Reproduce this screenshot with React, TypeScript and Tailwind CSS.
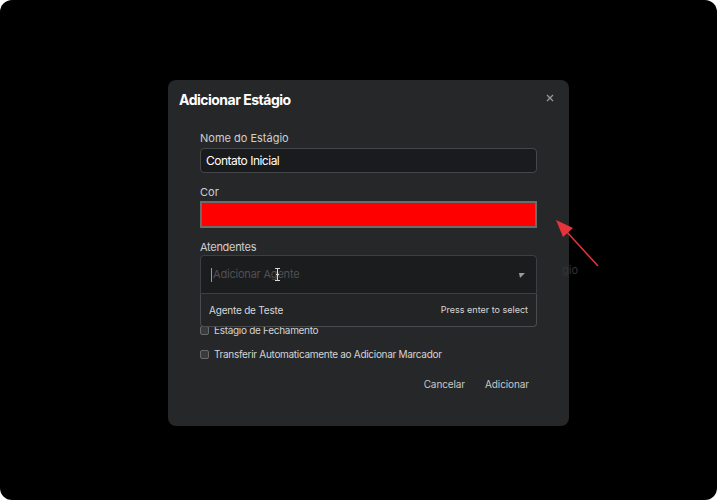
import React from 'react';

// Linha de checkbox simples
const CheckRow = ({ label, faint }: { label?: string; faint?: boolean }) => (
  <div className={`flex h-[16px] items-center gap-[5px] ${faint ? 'opacity-30' : ''}`}>
    <span className="h-[9px] w-[9px] rounded-[2px] border border-[#6a6a6a] bg-[#3a3b3d]" />
    {label && <span className="text-[10px] leading-[14px] tracking-[-0.3px] text-[#d4d4d4]">{label}</span>}
  </div>
);

export default function App() {
  return (
    <div className="bg-white" style={{ fontFamily: 'Inter, "Noto Sans", sans-serif' }}>
      <div className="relative h-[500px] w-[717px] overflow-hidden rounded-[12px] bg-black pl-[168px] pt-[80px]">
        {/* Janela do diálogo */}
        <div className="relative w-[401px] rounded-[8px] bg-[#262729] pb-[30px]">
          <div className="flex items-start justify-between pl-[11px] pr-[13px] pt-[10px]">
            <h2 className="text-[14px] font-bold leading-[20px] tracking-[-0.5px] text-white">
              Adicionar Estágio
            </h2>
            <button className="mt-[2px] text-[#9a9a9a]">
              <svg width="12" height="12" viewBox="0 0 12 12" fill="none" stroke="currentColor" strokeWidth="1.3">
                <path d="M3 3l6 6M9 3l-6 6" />
              </svg>
            </button>
          </div>

          <div className="px-8 pt-[21px]">
            <label className="block text-[11px] leading-[14px] text-[#cfcfcf]">Nome do Estágio</label>
            <div className="mt-[3px] flex h-[25px] items-center rounded-[4px] border border-[#45464a] bg-[#1a1b1d] px-[5px] text-[12px] tracking-[-0.5px] text-white">
              Contato Inicial
            </div>

            <label className="mt-[12px] block text-[11px] leading-[14px] text-[#cfcfcf]">Cor</label>
            <div className="mt-[2px] h-[27px] border-2 border-[#6b6b6b] bg-[#ff0000]" />

            <label className="mt-[12px] block text-[11px] leading-[14px] tracking-[-0.3px] text-[#cfcfcf]">Atendentes</label>
            <div className="relative mt-[1px]">
              <div className="relative flex h-[39px] items-center rounded-t-[4px] border border-[#3e3f42] bg-[#1b1c1e] pl-[10px] pr-[10px]">
                <span className="mr-[1px] h-[14px] w-px bg-[#9a9a9a]" />
                <span className="text-[11px] tracking-[-0.2px] text-[#4f5054]">Adicionar Agente</span>
                <svg className="absolute left-[73px] top-[12px]" width="7" height="13" viewBox="0 0 7 13" fill="none" stroke="#d8d8d8" strokeWidth="1">
                  <path d="M1 0.5h5M1 12.5h5M3.5 0.5v12M2 6.5h3" />
                </svg>
                <svg className="ml-auto mr-[1px]" width="6" height="6" viewBox="0 0 6 6">
                  <polygon points="0,1 6,1 1,6" fill="#9a9a9a" />
                </svg>
              </div>

              {/* Lista suspensa */}
              <div className="absolute left-0 right-0 top-full z-10 flex h-[33px] items-center justify-between rounded-b-[4px] border border-t-0 border-[#4a4b4f] bg-[#232426]/95 px-[8px]">
                <span className="text-[10px] tracking-[-0.2px] text-[#d8d8d8]">Agente de Teste</span>
                <span className="text-[9px] text-[#d8d8d8]">Press enter to select</span>
              </div>
            </div>

            <div className="mt-[4px] flex flex-col gap-[8px]">
              <CheckRow faint />
              <CheckRow label="Estágio de Fechamento" />
              <CheckRow label="Transferir Automaticamente ao Adicionar Marcador" />
            </div>

            <div className="mt-[10px] flex h-[24px] items-center justify-end gap-[20px] pr-[8px]">
              <button className="text-[10px] tracking-[-0.1px] text-[#c8c8c8]">Cancelar</button>
              <button className="text-[10px] tracking-[-0.1px] text-[#c8c8c8]">Adicionar</button>
            </div>
          </div>

          {/* Texto residual atrás da lista */}
          <span className="absolute left-[394px] top-[182px] text-[11px] text-[#333437]">gio</span>
        </div>

        {/* Seta de anotação */}
        <svg className="absolute left-0 top-0" width="717" height="500" viewBox="0 0 717 500" fill="none">
          <line x1="598" y1="266" x2="566" y2="231" stroke="#e8333a" strokeWidth="1.5" />
          <polygon points="556,220 573,228 563,237" fill="#e8333a" />
        </svg>
      </div>
    </div>
  );
}
